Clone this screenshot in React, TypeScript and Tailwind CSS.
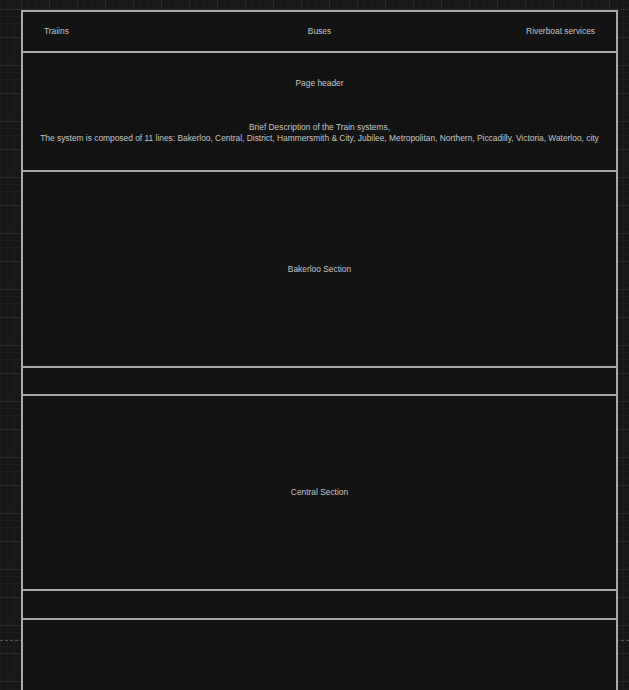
export default function App() {
    const font = { fontFamily: '"Liberation Sans", Arial, sans-serif' };

    return (
        <div
            className="relative min-h-screen w-full overflow-hidden bg-[#171717] bg-[linear-gradient(#2b2b2b_1px,transparent_1px),linear-gradient(90deg,#2b2b2b_1px,transparent_1px),linear-gradient(#1d1d1d_1px,transparent_1px),linear-gradient(90deg,#1d1d1d_1px,transparent_1px)] bg-[size:28px_28px,28px_28px,7px_7px,7px_7px] bg-[position:21px_9px,21px_9px,0_2px,0_0] pt-[10px] pl-[21px] text-[8.4px] leading-[11px] text-[#c4c4c4]"
            style={font}
        >
            {/* page fold marker */}
            <div className="absolute left-0 right-0 top-[640px] border-t border-dashed border-[#555]" />

            <div className="relative w-[597px]">
                {/* Main frame */}
                <div className="border-x-2 border-t-2 border-[#a9a9a9] bg-[#131313]">
                    {/* Nav */}
                    <nav className="grid h-[41px] grid-cols-3 items-center px-[21px] border-b-2 border-[#a9a9a9]">
                        <span className="text-left">Traiins</span>
                        <span className="text-center">Buses</span>
                        <span className="text-right">Riverboat services</span>
                    </nav>

                    {/* Header */}
                    <header className="flex h-[119px] flex-col items-center border-b-2 border-[#a9a9a9] pt-[25px] text-center">
                        <p>Page header</p>
                        <div className="mt-[33px]">
                            <p>Brief Description of the Train systems,</p>
                            <p>
                                The system is composed of 11 lines: Bakerloo, Central, District, Hammersmith &amp; City, Jubilee,
                                Metropolitan, Northern, Piccadilly, Victoria, Waterloo, city
                            </p>
                        </div>
                    </header>

                    {/* Bakerloo */}
                    <section className="flex h-[196px] items-center justify-center border-b-2 border-[#a9a9a9]">
                        Bakerloo Section
                    </section>
                    <div className="h-[28px] border-b-2 border-[#a9a9a9]" />

                    {/* Central */}
                    <section className="flex h-[195px] items-center justify-center border-b-2 border-[#a9a9a9]">
                        Central Section
                    </section>
                    <div className="h-[29px] border-b-2 border-[#a9a9a9]" />

                    {/* Next section */}
                    <section className="h-[90px]" />
                </div>
            </div>
        </div>
    );
}
